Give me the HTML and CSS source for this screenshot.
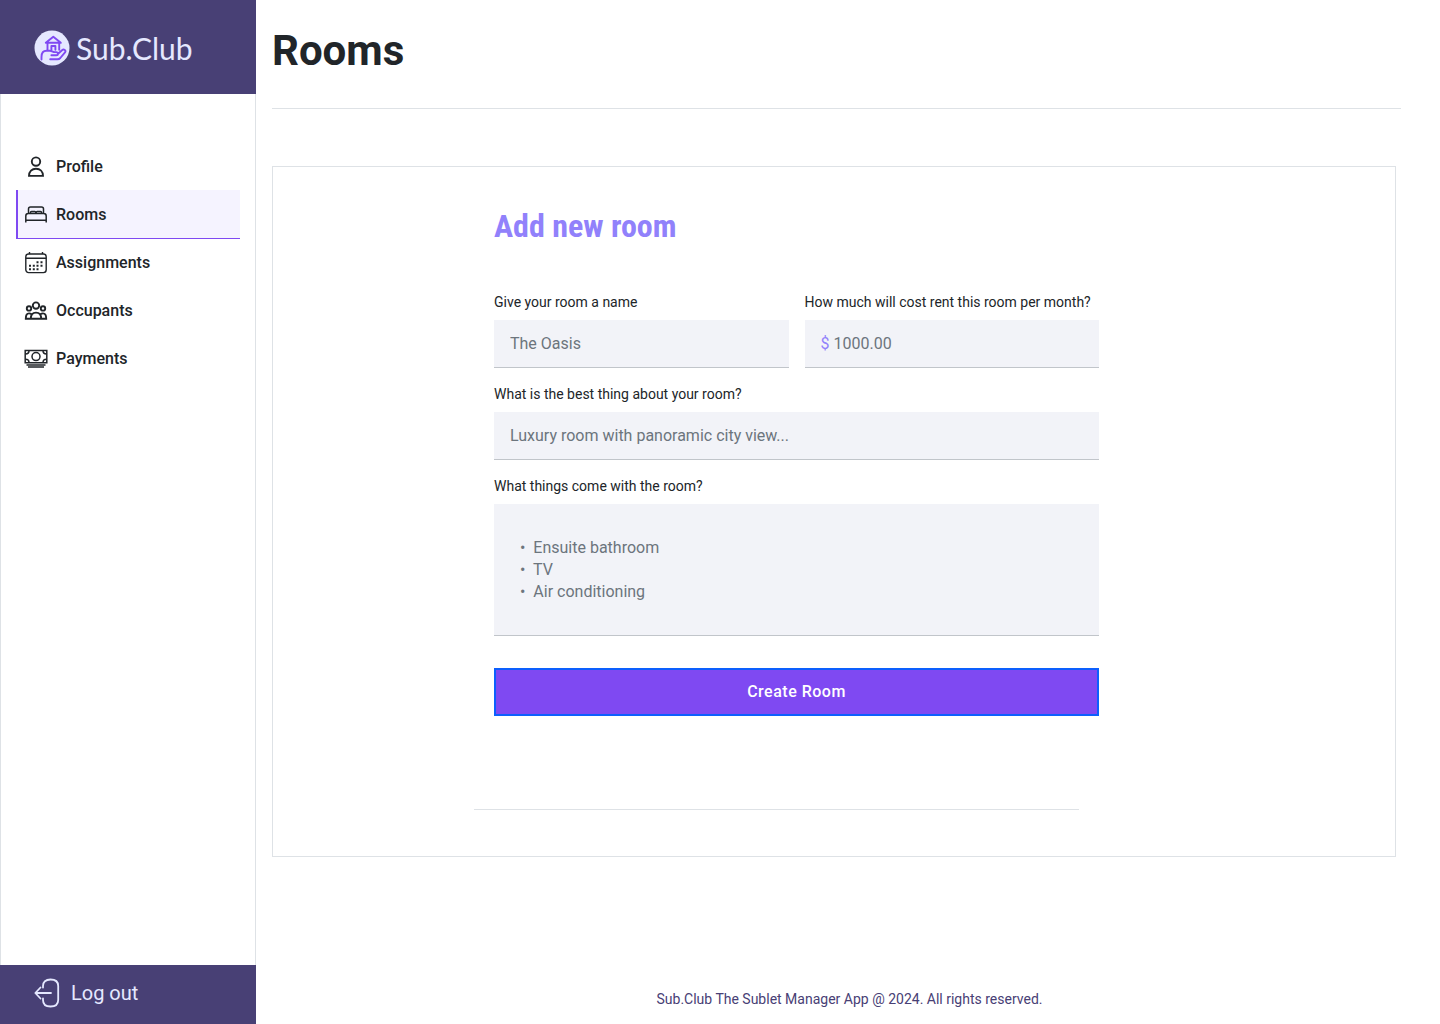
FILE: index.html
```html
<!DOCTYPE html>
<html lang="en">
<head>
<meta charset="utf-8">
<meta name="viewport" content="width=device-width, initial-scale=1">
<title>Rooms – Sub.Club</title>
<link rel="stylesheet" href="styles.css">
</head>
<body>
<div class="app">
  <aside class="sidebar">
    <a class="brand" href="#">
      <svg class="brand-mark" viewBox="0 0 36 36" aria-hidden="true">
        <circle cx="18" cy="18" r="17.5" fill="#e5e8ff"/>
        <g fill="none" stroke="#7f49f2" stroke-width="1.9" stroke-linecap="round" stroke-linejoin="round">
          <path d="M11.8 12.800 19.300 6.800 26.800 12.800zM13.500 13v6.800M25.200 13v6.800M17.400 19.800v-3.800h4v3.800"/>
          <path d="M7.500 29.500v-2.500c0-4 2-6.200 5-6.200h3.200c2.600 0 3.200 1.300 5 1.300h1.500c2.300 0 2.300 3.100 0 3.100h-4.800M23.800 24l4.200-3.800c1.900-1.500 4.400.2 3 2.200l-4.700 5.600c-.8.9-1.600 1.200-3 1.200h-7.100"/>
        </g>
      </svg>
      <span class="brand-name">Sub.Club</span>
    </a>
    <nav class="nav" aria-label="Main">
      <a class="nav-item" href="#">
        <svg class="icon" viewBox="0 0 24 24" aria-hidden="true"><circle cx="12" cy="7.600" r="4.200" stroke-width="1.900"/><path stroke-width="1.900" d="M5 21.900c0-4.600 2.900-7.200 7-7.200s7 2.600 7 7.200z"/></svg>
        Profile
      </a>
      <a class="nav-item active" href="#" aria-current="page">
        <svg class="icon" viewBox="0 0 24 24" aria-hidden="true"><path stroke-width="1.500" d="M4.500 11.500V7a2 2 0 0 1 2-2h11a2 2 0 0 1 2 2v4.500M1.800 20.500V14c0-1.500 1-2.500 2.500-2.500h15.400c1.500 0 2.500 1 2.500 2.500v6.500M1.800 18.300h20.400M6.500 11.500v-1.200q0-.8 1-.8h3.300q1 0 1 .8v1.200M12.200 11.500v-1.200q0-.8 1-.8h3.300q1 0 1 .8v1.200"/></svg>
        Rooms
      </a>
      <a class="nav-item" href="#">
        <svg class="icon" viewBox="0 0 24 24" aria-hidden="true"><rect x="1.800" y="4" width="20.400" height="18.600" rx="2.800" stroke-width="1.400"/><path stroke-width="1.400" d="M1.800 8.300h20.400M5.500 2.100v2M18.500 2.100v2"/><path class="dots" d="M12.500 11.300h2v2h-2zM16.500 11.300h2v2h-2zM5 14.800h2v2H5zM8.800 14.800h2v2h-2zM12.500 14.800h2v2h-2zM16.500 14.800h2v2h-2zM5 18.300h2v2H5zM8.800 18.300h2v2h-2zM12.500 18.300h2v2h-2z"/></svg>
        Assignments
      </a>
      <a class="nav-item" href="#">
        <svg class="icon" viewBox="0 0 24 24" aria-hidden="true"><g stroke-width="1.900"><circle cx="12" cy="7.600" r="3.200"/><circle cx="5" cy="10.400" r="2.200"/><circle cx="19" cy="10.400" r="2.200"/><path d="M6.800 20.800c0-4 1.800-6.200 5.200-6.200s5.200 2.200 5.200 6.200zM6.800 20.800h-5c0-3.600.8-5.400 3.200-5.400 1 0 1.800.3 2.400.8M17.200 20.800h5c0-3.600-.8-5.400-3.200-5.400-1 0-1.800.3-2.400.8"/></g></svg>
        Occupants
      </a>
      <a class="nav-item" href="#">
        <svg class="icon" viewBox="0 0 24 24" aria-hidden="true"><g stroke-width="1.500"><path d="M1.200 4.400h21.600v12.400H1.200zM2.500 18.900h19M4 21.100h16"/><circle cx="12" cy="10.600" r="4"/><path d="M1.500 7.900c2 0 3.500-1.200 3.500-3.200M22.500 7.900c-2 0-3.500-1.200-3.500-3.200M1.500 13.300c2 0 3.500 1.200 3.500 3.200M22.500 13.300c-2 0-3.500 1.200-3.500 3.200"/></g></svg>
        Payments
      </a>
    </nav>
    <button class="logout" type="button">
      <svg class="logout-icon" viewBox="0 0 26 30" aria-hidden="true"><path d="M9 9.500V8c0-4 2.600-6.500 7.500-6.500S24.200 4 24.200 8v14c0 4-2.800 6.500-7.700 6.500S9 26 9 22v-1.500M17 15H1.500M6.500 9.500 1.300 15l5.200 5.500"/></svg>
      Log out
    </button>
  </aside>
  <div class="page">
    <header class="page-header">
      <h1>Rooms</h1>
    </header>
    <main class="card">
      <form class="room-form">
        <h2>Add new room</h2>
        <div class="fields">
          <div class="field">
            <label for="name">Give your room a name</label>
            <input class="control" id="name" type="text" placeholder="The Oasis">
          </div>
          <div class="field">
            <label for="rent">How much will cost rent this room per month?</label>
            <div class="control money">
              <span class="currency">$</span>
              <input class="money-input" id="rent" type="text" inputmode="decimal" placeholder="1000.00">
            </div>
          </div>
          <div class="field wide">
            <label for="best">What is the best thing about your room?</label>
            <input class="control" id="best" type="text" placeholder="Luxury room with panoramic city view...">
          </div>
          <div class="field wide">
            <label for="things">What things come with the room?</label>
            <textarea class="control list" id="things" placeholder="•&nbsp; Ensuite bathroom&#10;•&nbsp; TV&#10;•&nbsp; Air conditioning"></textarea>
          </div>
        </div>
        <button class="submit" type="submit">Create Room</button>
      </form>
      <hr class="divider">
    </main>
    <footer class="footer">Sub.Club The Sublet Manager App @ 2024. All rights reserved.</footer>
  </div>
</div>
</body>
</html>
```
FILE: styles.css
```css
* {
  box-sizing: border-box;
}

body {
  margin: 0;
  background: #fff;
  color: #212529;
  font-family: Roboto, "Liberation Sans", sans-serif;
  font-size: 16px;
}

.app {
  display: flex;
  min-height: 100vh;
}

.sidebar {
  display: flex;
  flex: 0 0 256px;
  flex-direction: column;
}

.brand {
  display: flex;
  align-items: center;
  gap: 6px;
  height: 94px;
  padding: 2px 34px 0;
  background: #484075;
  color: #e5e8ff;
  text-decoration: none;
}

.brand-mark {
  flex: none;
  width: 36px;
  height: 36px;
}

.brand-name {
  font-family: Lato, sans-serif;
  font-size: 30px;
  line-height: 32px;
}

.nav {
  flex: 1;
  padding: 48px 15px;
  border: solid #dee2e6;
  border-width: 0 1px;
}

.nav-item {
  display: flex;
  align-items: center;
  gap: 8px;
  height: 48px;
  padding: 0 8px;
  color: #212529;
  font-weight: 500;
  text-decoration: none;
}

.nav-item.active {
  height: 49px;
  margin-bottom: -1px;
  padding-left: 6px;
  border-bottom: 1px solid #7f49f2;
  border-left: 2px solid #7f49f2;
  background: #f5f3ff;
}

.icon {
  width: 24px;
  height: 24px;
  fill: none;
  stroke: #212529;
}

.icon .dots {
  fill: #212529;
  stroke: none;
}

.logout {
  display: flex;
  align-items: center;
  gap: 11px;
  height: 59px;
  padding: 0 34px 3px;
  border: 0;
  background: #484075;
  color: #e5e8ff;
  font: 400 20px/24px Roboto, sans-serif;
}

.logout-icon {
  width: 26px;
  height: 30px;
  fill: none;
  stroke: currentColor;
  stroke-width: 1.8;
  stroke-linecap: round;
  stroke-linejoin: round;
}

.page {
  display: flex;
  flex: 1;
  flex-direction: column;
  min-width: 0;
}

.page-header {
  margin: 0 39px 57px 16px;
  padding: 26px 0 32px;
  border-bottom: 1px solid #dee2e6;
}

h1 {
  margin: 0;
  font-size: 42px;
  line-height: 50px;
}

.card {
  margin: 0 44px 32px 16px;
  padding: 39px 296px 46px 201px;
  border: 1px solid #dee2e6;
}

.room-form {
  padding-left: 20px;
}

h2 {
  margin: 0 0 46px;
  color: #9181fb;
  font-family: "Roboto Condensed", Roboto, sans-serif;
  font-size: 32px;
  line-height: 40px;
}

.fields {
  display: grid;
  grid-template-columns: 1fr 1fr;
  gap: 16px;
}

.field {
  display: flex;
  flex-direction: column;
  gap: 8px;
  min-width: 0;
}

.wide {
  grid-column: 1 / -1;
}

label {
  font-size: 14px;
  line-height: 20px;
}

.control {
  width: 100%;
  height: 48px;
  padding: 0 16px;
  border: 0;
  border-bottom: 1px solid #c1c5ca;
  border-radius: 0;
  background: #f2f3f8;
  color: #212529;
  font: 400 16px/22px Roboto, sans-serif;
}

.money {
  display: flex;
  align-items: center;
  gap: 4px;
}

.currency {
  color: #9181fb;
}

.money-input {
  flex: 1;
  min-width: 0;
  padding: 0;
  border: 0;
  background: none;
  color: inherit;
  font: inherit;
}

::placeholder {
  color: #6c757d;
  opacity: 1;
}

.list {
  display: block;
  height: 132px;
  padding: 33px 26px;
  resize: none;
}

.submit {
  width: 100%;
  height: 48px;
  margin-top: 32px;
  border: 2px solid #0d5ffd;
  background: #7f49f2;
  color: #fff;
  font: 500 16px/24px Roboto, sans-serif;
  letter-spacing: 0.5px;
}

.divider {
  height: 1px;
  margin: 93px 20px 0 0;
  border: 0;
  background: #dee2e6;
}

.footer {
  margin-top: auto;
  padding: 0 13px 15px 16px;
  color: #484075;
  font-size: 14px;
  line-height: 20px;
  text-align: center;
}
```
